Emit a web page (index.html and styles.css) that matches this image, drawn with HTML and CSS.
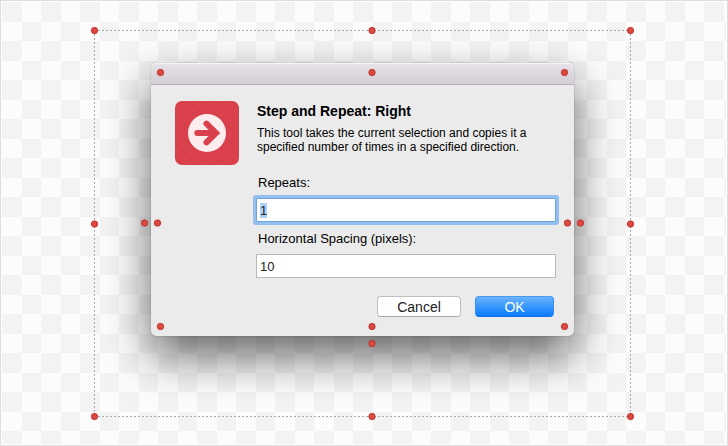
FILE: index.html
```html
<!DOCTYPE html>
<html lang="en">
<head>
<meta charset="utf-8">
<title>Step and Repeat: Right</title>
<link rel="stylesheet" href="styles.css">
</head>
<body>
<main class="canvas">
  <div class="selection">
    <form class="dialog">
      <div class="titlebar"></div>
      <div class="content">
        <svg class="icon" viewBox="0 0 64 64" aria-hidden="true">
          <defs>
            <pattern id="stripes" width="14" height="14" patternUnits="userSpaceOnUse">
              <path d="M-1 -1L15 15M-1 13L1 15M13 -1L15 1" stroke="#cf3d48" stroke-width="1"/>
            </pattern>
          </defs>
          <rect width="64" height="64" rx="7" fill="#da414c"/>
          <rect width="64" height="64" rx="7" fill="url(#stripes)"/>
          <circle cx="32" cy="32" r="19" fill="#fcecee"/>
          <path d="M22.3 32H38" fill="none" stroke="#da414c" stroke-width="6" stroke-linecap="round"/>
          <path d="M31.5 22.6L41 32L31.5 41.4" fill="none" stroke="#da414c" stroke-width="6" stroke-linecap="round" stroke-linejoin="miter"/>
        </svg>
        <div class="body">
          <h1>Step and Repeat: Right</h1>
          <p>This tool takes the current selection and copies it a<br>specified number of times in a specified direction.</p>
          <label for="repeats">Repeats:</label>
          <input id="repeats" type="text" value="1" autofocus>
          <label for="spacing">Horizontal Spacing (pixels):</label>
          <input id="spacing" type="text" value="10">
          <div class="actions">
            <button class="cancel" type="button">Cancel</button>
            <button class="ok" type="button">OK</button>
          </div>
        </div>
      </div>
      <i class="handle in top left"></i>
      <i class="handle in top center"></i>
      <i class="handle in top right"></i>
      <i class="handle in middle left"></i>
      <i class="handle in middle right"></i>
      <i class="handle in bottom left"></i>
      <i class="handle in bottom center"></i>
      <i class="handle in bottom right"></i>
      <i class="handle out middle left"></i>
      <i class="handle out middle right"></i>
      <i class="handle out bottom center"></i>
    </form>
    <i class="handle top left"></i>
    <i class="handle top center"></i>
    <i class="handle top right"></i>
    <i class="handle middle left"></i>
    <i class="handle middle right"></i>
    <i class="handle bottom left"></i>
    <i class="handle bottom center"></i>
    <i class="handle bottom right"></i>
  </div>
</main>
<script src="script.js"></script>
</body>
</html>
```
FILE: styles.css
```css
* {
  box-sizing: border-box;
}

body {
  margin: 0;
  font-family: "Liberation Sans", Arial, sans-serif;
  color: #000;
}

.canvas {
  display: flex;
  min-height: 100vh;
  padding: 28px 95px 27px 92px;
  border: 1px solid #ddd;
  outline: 1px solid #fff;
  outline-offset: -2px;
  background: conic-gradient(at 20px 20px, #fcfcfc 25%, #f3f3f3 0 50%, #fcfcfc 0 75%, #f3f3f3 0) 1px 1px / 39px 39px;
}

.selection {
  position: relative;
  flex: 1;
  margin: 1px;
  padding: 33px 57px 80px 57px;
  background:
    repeating-linear-gradient(90deg, #aaa 0 2px, transparent 2px 4px) top / 100% 1px no-repeat,
    repeating-linear-gradient(90deg, #aaa 0 2px, transparent 2px 4px) bottom / 100% 1px no-repeat,
    repeating-linear-gradient(#aaa 0 2px, transparent 2px 4px) left / 1px 100% no-repeat,
    repeating-linear-gradient(#aaa 0 2px, transparent 2px 4px) right / 1px 100% no-repeat;
}

.dialog {
  position: relative;
  border-radius: 5px;
  background: #ebebeb;
  box-shadow: 0 0 1px rgba(0, 0, 0, 0.6), 0 20px 45px rgba(0, 0, 0, 0.6);
}

.titlebar {
  height: 22px;
  border-bottom: 1px solid #b3adb5;
  border-radius: 5px 5px 0 0;
  background: linear-gradient(#e9e4ea, #d3ced4);
  box-shadow: inset 0 1px #f5f3f5;
}

.content {
  display: flex;
  gap: 17px;
  padding: 16px 18px 19px 24px;
}

.icon {
  flex: none;
  width: 64px;
  height: 64px;
}

.body {
  flex: 1;
}

h1 {
  margin: 2px 0 7px 1px;
  font-size: 14px;
  line-height: 16px;
}

p {
  margin: 0 0 21px 1px;
  font-size: 12px;
  line-height: 14px;
  white-space: nowrap;
}

label {
  display: block;
  margin: 0 0 7px 2px;
  font-size: 13px;
  line-height: 16px;
}

input {
  display: block;
  width: 100%;
  height: 24px;
  margin: 0 0 9px;
  padding: 0 3px;
  border: 1px solid #b9b9b9;
  border-radius: 0;
  outline: 0;
  background: #fff;
  color: #222;
  font: 13px/16px "Liberation Sans", Arial, sans-serif;
}

input:focus {
  border-color: #6fa3dc;
  box-shadow: 0 0 0 3px #94c0f0;
  border-radius: 1px;
}

input::selection {
  background: #acd1fb;
  color: #222;
}

.actions {
  display: flex;
  justify-content: flex-end;
  gap: 14px;
  padding: 9px 2px 0 0;
}

button {
  height: 21px;
  padding: 0;
  border: 1px solid #bfbfbf;
  border-bottom-color: #a8a8a8;
  border-radius: 4px;
  background: #fff;
  color: #222;
  font: 14px/18px "Liberation Sans", Arial, sans-serif;
}

.cancel {
  width: 84px;
}

.ok {
  width: 79px;
  border-color: #4a9bf0 #3b8cf0 #1470e8;
  background: linear-gradient(#6bb3fa, #087dff);
  color: #fff;
}

.handle {
  --inset: -3px;
  position: absolute;
  width: 7px;
  height: 7px;
  border: 1px solid #c32f2b;
  border-radius: 50%;
  background: #dc4b41;
  box-shadow: 0 0 1px rgba(190, 60, 50, 0.5);
}

.in {
  --inset: 6px;
}

.out {
  --inset: -11px;
}

.middle.in {
  --inset: 3px;
}

.middle.out {
  --inset: -10px;
}

.top {
  top: var(--inset);
}

.bottom {
  bottom: var(--inset);
}

.left {
  left: var(--inset);
}

.right {
  right: var(--inset);
}

.center {
  left: calc(50% + 9px);
  translate: -50% 0;
}

.middle {
  top: calc(50% + 23px);
  translate: 0 -50%;
}

.selection > .middle {
  top: 50%;
}
```
FILE: script.js
```js
const repeats = document.getElementById("repeats");
repeats.focus();
repeats.select();
```
